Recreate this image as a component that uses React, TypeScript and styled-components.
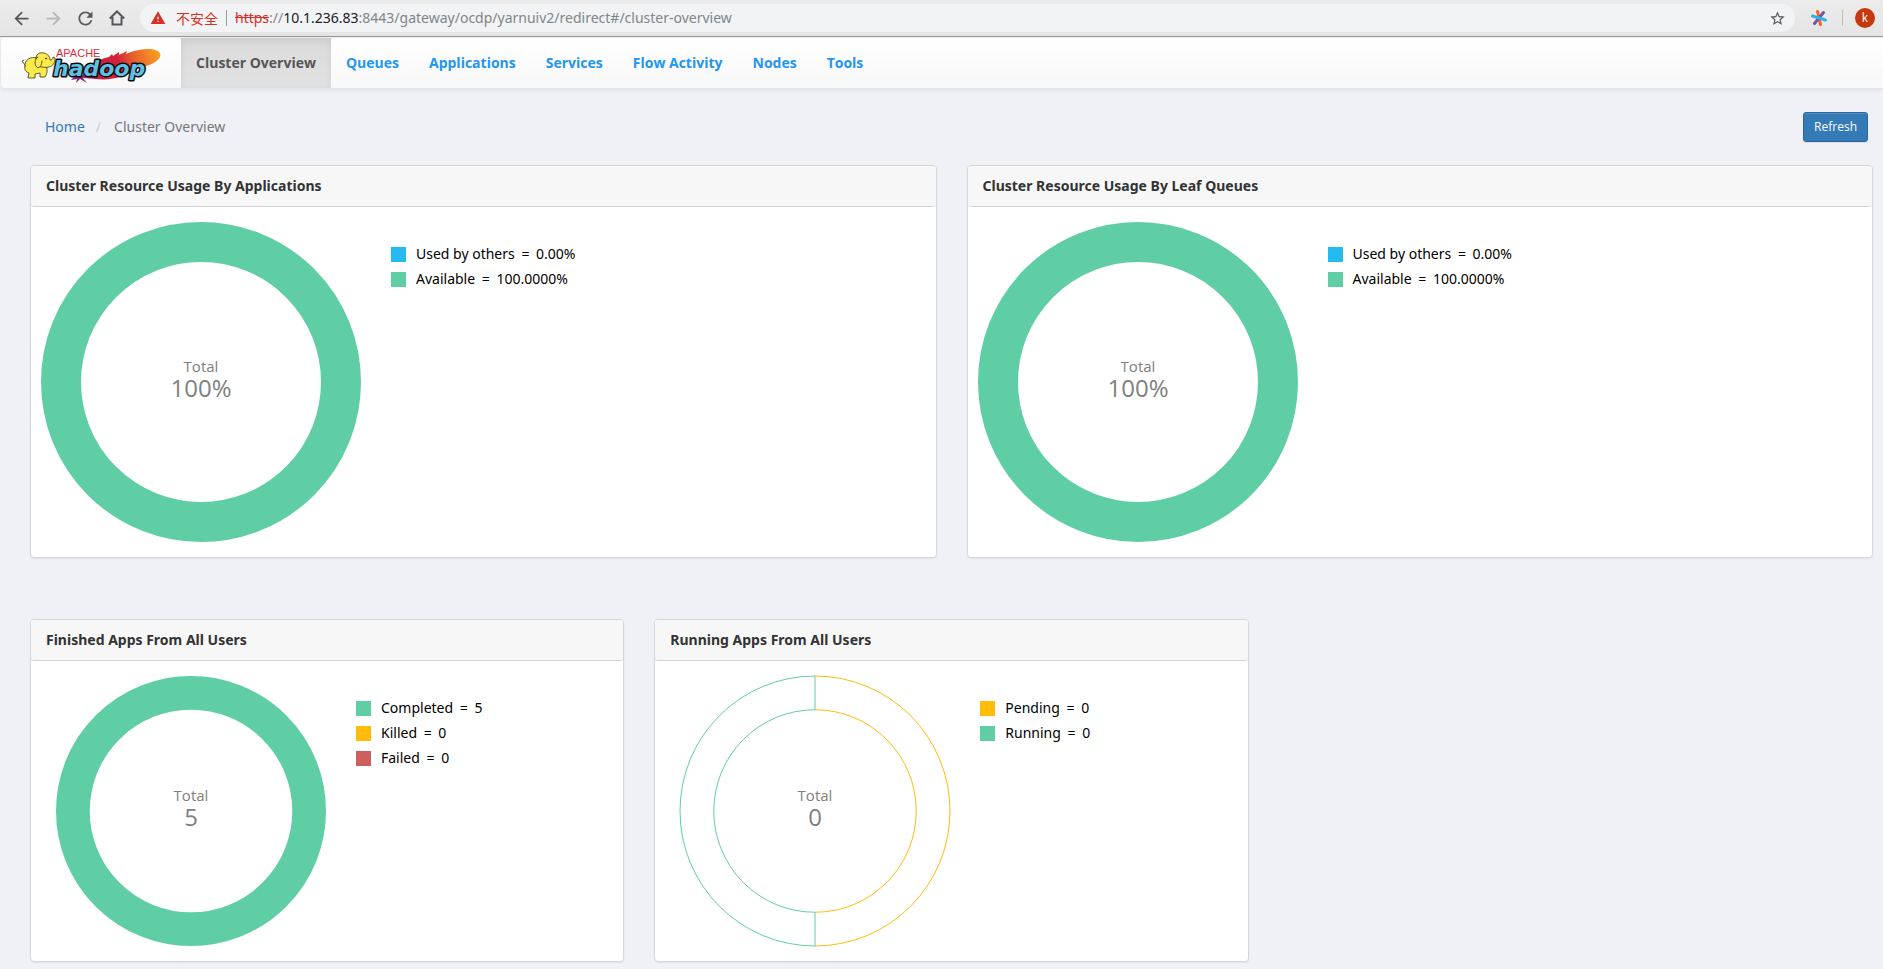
import React from "react";
import styled, { createGlobalStyle } from "styled-components";
import { MdArrowBack, MdArrowForward, MdRefresh, MdStarBorder, MdWarning } from "react-icons/md";

const GlobalStyle = createGlobalStyle`
  *, *::before, *::after { box-sizing: border-box; }
  body {
    margin: 0;
    background: #f0f1f7;
    color: #333;
    font-family: "Noto Sans", "Noto Sans CJK SC", sans-serif;
    font-size: 14px;
    line-height: 20px;
  }
`;

const BrowserBar = styled.header`
  display: flex;
  align-items: center;
  height: 37px;
  padding: 0 8px 0 10px;
  background: linear-gradient(#ebebeb, #e5e5e5);
  border-bottom: 1px solid #9b9b9b;
`;

const BrowserButtons = styled.div`
  display: flex;
  gap: 10px;
`;

const BrowserButton = styled.button<{ $muted?: boolean }>`
  display: flex;
  align-items: center;
  justify-content: center;
  width: 22px;
  height: 22px;
  padding: 0;
  border: 0;
  background: none;
  color: ${(p) => (p.$muted ? "#b4b5b7" : "#54575b")};
`;

const AddressBar = styled.div`
  display: flex;
  flex: 1;
  align-items: center;
  height: 28px;
  margin-left: 12px;
  padding: 0 7px 0 10px;
  border-radius: 14px;
  background: #f1f3f4;
`;

const Insecure = styled.span`
  display: flex;
  align-items: center;
  gap: 10px;
  margin-right: 8px;
  padding-right: 8px;
  border-right: 1px solid #9a9c9e;
  color: #d93025;
  font-family: "Noto Sans CJK SC", sans-serif;
  font-size: 14px;
  line-height: 16px;
`;

const Url = styled.span`
  flex: 1;
  color: #80868b;
`;

const Scheme = styled.s`
  color: #d93025;
`;

const Host = styled.span`
  color: #202124;
`;

const Extensions = styled.div`
  display: flex;
  align-items: center;
  margin-left: 13px;
`;

const Divider = styled.span`
  width: 1px;
  height: 16px;
  margin: 0 12px;
  background: #bdbdbd;
`;

const Avatar = styled.button`
  width: 20px;
  height: 20px;
  padding: 0;
  border: 0;
  border-radius: 10px;
  background: #c5370c;
  color: #fff;
  font: 12px/18px "Open Sans", sans-serif;
`;

const NavBar = styled.nav`
  display: flex;
  height: 51px;
  margin: 1px 0 0 1px;
  border-bottom: 1px solid #e4e4ea;
  border-radius: 4px 0 0 4px;
  background: linear-gradient(#fff, #f8f8f8);
  box-shadow: 0 1px 5px rgba(0, 0, 0, 0.08);
`;

const Brand = styled.a`
  display: block;
  width: 180px;
  padding: 6px 0 0 19px;
`;

const NavLink = styled.a<{ $active?: boolean }>`
  padding: 15px;
  font-family: "Open Sans", "Noto Sans", sans-serif;
  font-size: 14px;
  font-weight: 700;
  line-height: 20px;
  text-decoration: none;
  color: ${(p) => (p.$active ? "#555" : "#2196f3")};
  background: ${(p) => (p.$active ? "linear-gradient(#dbdbdb, #e2e2e2)" : "none")};
  box-shadow: ${(p) => (p.$active ? "inset 0 3px 9px rgba(0, 0, 0, 0.075)" : "none")};
`;

const TitleRow = styled.div`
  display: flex;
  align-items: center;
  justify-content: space-between;
  padding: 23px 15px 23px 45px;
`;

const Breadcrumb = styled.ol`
  display: flex;
  margin: 0;
  padding: 0;
  list-style: none;
  color: #777;
`;

const Crumb = styled.li`
  & + &::before {
    content: "/";
    padding: 0 13px 0 11px;
    color: #ccc;
  }
`;

const CrumbLink = styled.a`
  color: #337ab7;
  text-decoration: none;
`;

const RefreshButton = styled.button`
  height: 30px;
  padding: 0 10px;
  border: 1px solid #2b669a;
  border-radius: 3px;
  background: #337ab7;
  box-shadow: inset 0 1px 0 rgba(255, 255, 255, 0.15), 0 1px 1px rgba(0, 0, 0, 0.075);
  color: #fff;
  font: 12px/18px "Open Sans", sans-serif;
`;

const PanelGrid = styled.section<{ $columns: number }>`
  display: grid;
  grid-template-columns: repeat(${(p) => p.$columns}, minmax(0, 1fr));
  gap: 30px;
  padding: 0 10px 0 30px;
  margin-bottom: ${(p) => (p.$columns === 2 ? "61px" : "7px")};
`;

const Panel = styled.article`
  border: 1px solid #d5d6d9;
  border-radius: 4px;
  background: #fff;
  box-shadow: 0 1px 2px rgba(0, 0, 0, 0.06);
`;

const PanelTitle = styled.h2`
  margin: 0;
  padding: 10px 15px;
  border-bottom: 1px solid #d5d6d9;
  border-radius: 3px;
  background: #f7f7f7;
  font-size: 14px;
  font-weight: 700;
  line-height: 20px;
`;

const PanelBody = styled.div<{ $inset: number }>`
  display: flex;
  align-items: flex-start;
  gap: 29px;
  padding: 14px ${(p) => p.$inset}px;
`;

const ChartSvg = styled.svg`
  display: block;
  flex: none;
`;

const Legend = styled.ul`
  display: flex;
  flex-direction: column;
  gap: 5px;
  margin: 0;
  padding: 23px 0 0;
  list-style: none;
  color: #000;
`;

const LegendItem = styled.li<{ $color: string }>`
  display: flex;
  align-items: center;
  gap: 10px;
  line-height: 20px;

  &::before {
    content: "";
    width: 15px;
    height: 15px;
    background: ${(p) => p.$color};
  }
`;

const Equals = styled.span`
  margin: 0 3px;
`;

const ChartText = styled.text<{ $large?: boolean }>`
  fill: #808080;
  font-family: "Open Sans", "Noto Sans", sans-serif;
  font-size: ${(p) => (p.$large ? 24 : 15)}px;
  text-anchor: middle;
`;

const GREEN = "#60cea5";
const YELLOW = "#ffbc0b";
const BLUE = "#26bbf0";
const RED = "#cc6060";

type Entry = { label: string; value: string; color: string };
type ChartProps = {
  title: string;
  total: string;
  radius: number;
  entries: Entry[];
  empty?: boolean;
};

function Donut({ total, radius, empty }: { total: string; radius: number; empty?: boolean }) {
  const c = radius + 1;
  const inner = radius * 0.75;
  const arc = (r: number, sweep: 0 | 1) => `M${c} ${c - r}A${r} ${r} 0 0 ${sweep} ${c} ${c + r}`;
  return (
    <ChartSvg width={c * 2} height={c * 2} role="img" aria-label={`Total ${total}`}>
      {empty ? (
        <g fill="none">
          <path d={arc(radius, 1) + arc(inner, 1)} stroke={YELLOW} />
          <path
            d={`${arc(radius, 0)}V${c + inner}${arc(inner, 0)}M${c} ${c - inner}V${c - radius}`}
            stroke={GREEN}
          />
        </g>
      ) : (
        <circle cx={c} cy={c} r={radius * 0.875} fill="none" stroke={GREEN} strokeWidth={radius / 4} />
      )}
      <ChartText x={c} y={c - 10}>Total</ChartText>
      <ChartText $large x={c} y={c + 15}>{total}</ChartText>
    </ChartSvg>
  );
}

function ChartPanel({ title, total, radius, entries, empty }: ChartProps) {
  return (
    <Panel>
      <PanelTitle>{title}</PanelTitle>
      <PanelBody $inset={radius === 160 ? 9 : 24}>
        <Donut total={total} radius={radius} empty={empty} />
        <Legend>
          {entries.map((e) => (
            <LegendItem key={e.label} $color={e.color}>
              <span>{e.label} <Equals>=</Equals> {e.value}</span>
            </LegendItem>
          ))}
        </Legend>
      </PanelBody>
    </Panel>
  );
}

function HadoopLogo() {
  return (
    <svg width="145" height="40" viewBox="20 44 145 40" role="img" aria-label="Apache Hadoop">
      <defs>
        <linearGradient id="feather" x1="80" y1="78" x2="160" y2="54" gradientUnits="userSpaceOnUse">
          <stop offset="0" stopColor="#8b2a72" />
          <stop offset="0.25" stopColor="#c5203f" />
          <stop offset="0.5" stopColor="#d6233a" />
          <stop offset="0.68" stopColor="#e8602c" />
          <stop offset="1" stopColor="#f9a11f" />
        </linearGradient>
      </defs>
      <path
        d="M80 78L92 64C98 60 104 58 109 57L112 54L113 56L119 52L119 55L127 51L126 54C134 50 144 49 150 49C157 49 162 53 160 57C157 63 148 66 138 68C128 76 112 81 96 79L84 78z"
        fill="url(#feather)"
      />
      <path d="M75 76l-4 4 6-1-1 4 4-4 7 4-5-6z" fill="#8b2a82" />
      <text x="56" y="57" fill="#d9303e" fontFamily="Liberation Sans, sans-serif" fontSize="11">APACHE</text>
      <text
        x="53"
        y="76"
        fill="#60c0e4"
        stroke="#0b0b0b"
        strokeWidth="3"
        strokeLinejoin="round"
        paintOrder="stroke"
        fontFamily="DejaVu Sans, sans-serif"
        fontSize="22"
        fontStyle="italic"
        fontWeight="700"
      >
        hadoop
      </text>
      <g fill="#fce94a" stroke="#39370f" strokeWidth="0.8" strokeLinejoin="round" strokeLinecap="round">
        <path d="M25 65L22 61L24 60" fill="none" />
        <path d="M25 66C24 60 31 56 37 58L46 66C48 70 47 74 45 77L40 77L40 73L35 74L35 78L28 78L29 73C26 72 24 70 25 66z" />
        <path d="M36 58C36 54 40 52 44 53C48 54 50 57 50 60C52 60 53 59 53 57L55 58C55 63 53 66 49 67C46 68 43 67 41 67C38 66 36 63 36 58z" />
        <path d="M38 57C34 59 34 66 38 68C41 67 42 64 42 61" />
        <circle cx="46" cy="58.500" r="0.600" fill="#222" />
      </g>
    </svg>
  );
}

const NAV_ITEMS = ["Cluster Overview", "Queues", "Applications", "Services", "Flow Activity", "Nodes", "Tools"];

const USAGE: Entry[] = [
  { label: "Used by others", value: "0.00%", color: BLUE },
  { label: "Available", value: "100.0000%", color: GREEN },
];

export default function App() {
  return (
    <>
      <GlobalStyle />
      <BrowserBar>
        <BrowserButtons>
          <BrowserButton aria-label="Back"><MdArrowBack size={21} /></BrowserButton>
          <BrowserButton aria-label="Forward" $muted><MdArrowForward size={21} /></BrowserButton>
          <BrowserButton aria-label="Reload"><MdRefresh size={21} /></BrowserButton>
          <BrowserButton aria-label="Home">
            <svg width="18" height="18" viewBox="0 0 18 18" fill="none" stroke="currentColor" strokeWidth="2">
              <path d="M1.800 9.500L9 2.500l7.200 7M4.500 8v7.500h9V8" />
            </svg>
          </BrowserButton>
        </BrowserButtons>
        <AddressBar>
          <Insecure><MdWarning size={16} />不安全</Insecure>
          <Url>
            <Scheme>https</Scheme>://<Host>10.1.236.83</Host>:8443/gateway/ocdp/yarnuiv2/redirect#/cluster-overview
          </Url>
          <BrowserButton aria-label="Bookmark"><MdStarBorder size={17} /></BrowserButton>
        </AddressBar>
        <Extensions>
          <BrowserButton aria-label="Extension">
            <svg width="18" height="18" viewBox="0 0 18 18" fill="none" strokeWidth="3" strokeLinecap="round">
              <path d="M7.500 2.500l3 13" stroke="#f26522" />
              <path d="M13.500 3.500l-9 11" stroke="#7e4fa0" />
              <path d="M2.500 7l13 4" stroke="#29b5ea" />
            </svg>
          </BrowserButton>
          <Divider />
          <Avatar aria-label="Profile k">k</Avatar>
        </Extensions>
      </BrowserBar>
      <NavBar>
        <Brand href="#/"><HadoopLogo /></Brand>
        {NAV_ITEMS.map((item, i) => (
          <NavLink key={item} href="#/cluster-overview" $active={i === 0}>{item}</NavLink>
        ))}
      </NavBar>
      <main>
        <TitleRow>
          <Breadcrumb>
            <Crumb><CrumbLink href="#/">Home</CrumbLink></Crumb>
            <Crumb>Cluster Overview</Crumb>
          </Breadcrumb>
          <RefreshButton>Refresh</RefreshButton>
        </TitleRow>
        <PanelGrid $columns={2}>
          <ChartPanel title="Cluster Resource Usage By Applications" total="100%" radius={160} entries={USAGE} />
          <ChartPanel title="Cluster Resource Usage By Leaf Queues" total="100%" radius={160} entries={USAGE} />
        </PanelGrid>
        <PanelGrid $columns={3}>
          <ChartPanel
            title="Finished Apps From All Users"
            total="5"
            radius={135}
            entries={[
              { label: "Completed", value: "5", color: GREEN },
              { label: "Killed", value: "0", color: YELLOW },
              { label: "Failed", value: "0", color: RED },
            ]}
          />
          <ChartPanel
            title="Running Apps From All Users"
            total="0"
            radius={135}
            empty
            entries={[
              { label: "Pending", value: "0", color: YELLOW },
              { label: "Running", value: "0", color: GREEN },
            ]}
          />
        </PanelGrid>
      </main>
    </>
  );
}
